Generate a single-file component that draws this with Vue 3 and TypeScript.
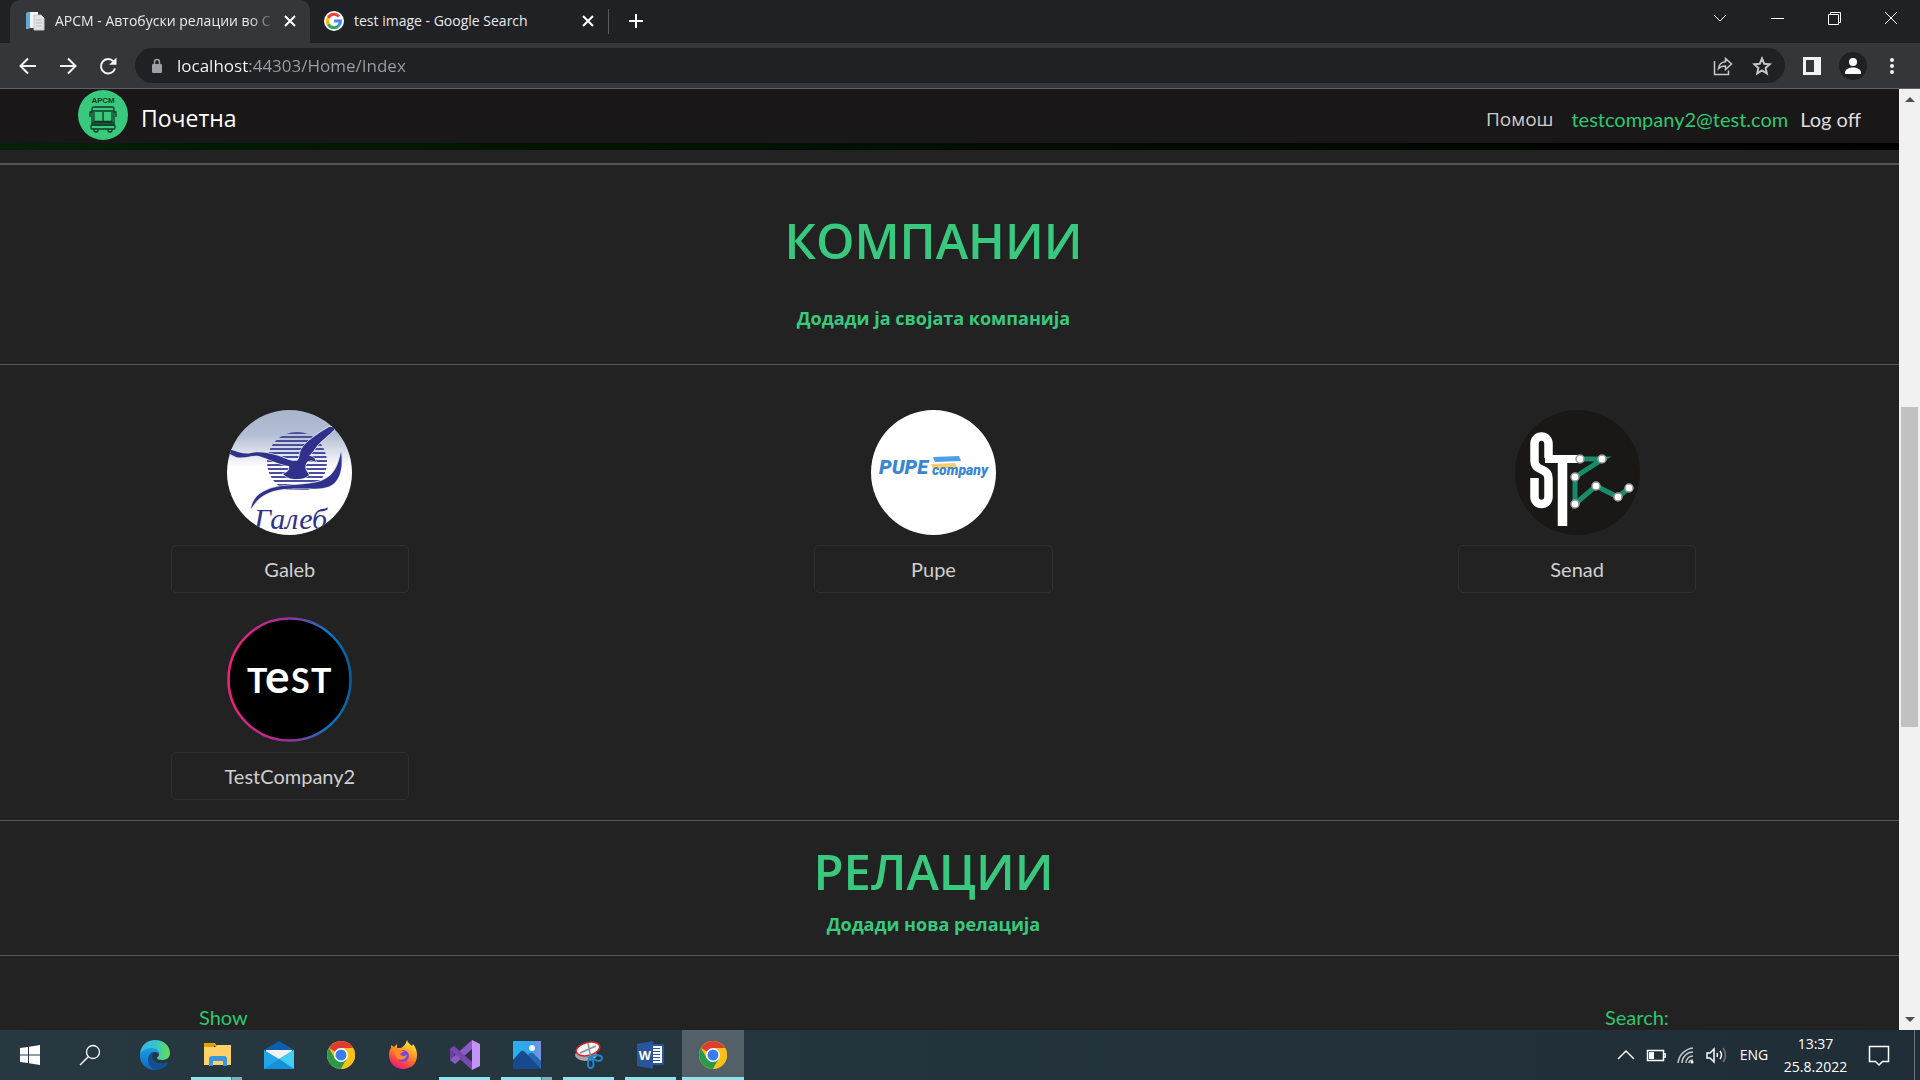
<script setup lang="ts">
interface Company {
  name: string
  logo: 'galeb' | 'pupe' | 'senad' | 'test'
}

interface TaskItem {
  id: string
  label: string
  state: 'idle' | 'open' | 'multi' | 'active'
}

const companies: Company[] = [
  { name: 'Galeb', logo: 'galeb' },
  { name: 'Pupe', logo: 'pupe' },
  { name: 'Senad', logo: 'senad' },
  { name: 'TestCompany2', logo: 'test' },
]

const tasks: TaskItem[] = [
  { id: 'edge', label: 'Edge', state: 'idle' },
  { id: 'explorer', label: 'File Explorer', state: 'multi' },
  { id: 'mail', label: 'Mail', state: 'idle' },
  { id: 'chrome', label: 'Chrome', state: 'idle' },
  { id: 'firefox', label: 'Firefox', state: 'idle' },
  { id: 'vs', label: 'Visual Studio', state: 'open' },
  { id: 'photos', label: 'Photos', state: 'multi' },
  { id: 'snip', label: 'Snipping Tool', state: 'open' },
  { id: 'word', label: 'Word', state: 'open' },
  { id: 'chrome', label: 'Chrome', state: 'active' },
]

// Stripes of the sun behind the gull
const sunStripes: number[] = Array.from({ length: 15 }, (_, i) => 22 + i * 4)
</script>

<template>
  <div class="screen">
    <header class="browser">
      <div class="tabstrip">
        <div class="tab active">
          <svg class="favicon" viewBox="0 0 20 20" aria-hidden="true">
            <path d="M1 2l4-1h8v16H5l-4 1z" fill="#f3f4f5" />
            <path d="M1 2l4-1v16l-4 1z" fill="#5fa8d8" />
            <path d="M9 4h7l3 3v12H9z" fill="#e2e5e8" stroke="#c3c8cd" />
            <path d="M11 9h6M11 12h6M11 15h6" stroke="#b8bec5" />
          </svg>
          <span class="tab-title fade">АРСМ - Автобуски релации во С</span>
          <button class="tab-close" aria-label="Close tab">
            <svg viewBox="0 0 12 12"><path d="M1 1l10 10M11 1L1 11" /></svg>
          </button>
        </div>
        <div class="tab">
          <svg class="favicon" viewBox="0 0 20 20" aria-hidden="true">
            <circle cx="10" cy="10" r="10" fill="#fff" />
            <g fill="none" stroke-width="3">
              <path d="M15 5.4A6.6 6.6 0 0 0 4.2 7" stroke="#ea4335" />
              <path d="M4.2 7a6.6 6.6 0 0 0 0 6.2" stroke="#fbbc05" />
              <path d="M4.2 13.2a6.6 6.6 0 0 0 10.3 1.7" stroke="#34a853" />
              <path d="M14.5 14.900a6.500 6.500 0 0 0 2-4.900H10.200" stroke="#4285f4" />
            </g>
          </svg>
          <span class="tab-title">test image - Google Search</span>
          <button class="tab-close" aria-label="Close tab">
            <svg viewBox="0 0 12 12"><path d="M1 1l10 10M11 1L1 11" /></svg>
          </button>
        </div>
        <span class="tab-sep"></span>
        <button class="new-tab" aria-label="New tab">
          <svg viewBox="0 0 16 16"><path d="M8 1v14M1 8h14" /></svg>
        </button>
        <div class="window-buttons">
          <button aria-label="Search tabs"><svg viewBox="0 0 16 16"><path d="M2 5l6 6 6-6" /></svg></button>
          <button aria-label="Minimize"><svg viewBox="0 0 16 16"><path d="M2 8.5h13" shape-rendering="crispEdges" /></svg></button>
          <button aria-label="Restore"><svg viewBox="0 0 16 16"><path d="M2.5 4.5h10v10h-10zM4.500 4.500v-2h10v10h-2" /></svg></button>
          <button aria-label="Close"><svg viewBox="0 0 16 16"><path d="M2 2l12 12M14 2L2 14" /></svg></button>
        </div>
      </div>
      <div class="toolbar">
        <button class="tool" aria-label="Back">
          <svg viewBox="0 0 20 20"><path d="M18 10H3M10 2.500L2.500 10l7.500 7.500" /></svg>
        </button>
        <button class="tool" aria-label="Forward">
          <svg viewBox="0 0 20 20"><path d="M2 10h15M10 2.500l7.500 7.500-7.500 7.500" /></svg>
        </button>
        <button class="tool" aria-label="Reload">
          <svg viewBox="0 0 20 20">
            <path d="M17 12.500A7.200 7.200 0 1 1 15.500 5.400" />
            <path d="M18.500 1.500v7.300h-7.300z" class="solid" />
          </svg>
        </button>
        <div class="omnibox">
          <svg class="lock" viewBox="0 0 12 16" aria-hidden="true">
            <rect x="1" y="6" width="10" height="9" rx="1" fill="#9aa0a6" />
            <path d="M3.500 6V4a2.500 2.500 0 0 1 5 0v2" fill="none" stroke="#9aa0a6" stroke-width="1.500" />
          </svg>
          <input class="url" type="text" value="localhost:44303/Home/Index" aria-label="Address" />
          <button class="omni-btn" aria-label="Share">
            <svg viewBox="0 0 20 20">
              <path d="M1.500 5v13.500h14v-4" />
              <path d="M5.500 12.500C6 8 8.500 6 12.500 5.700V2.500L18.500 8l-6 5.500V10c-3 0-5.200.6-7 2.500z" />
            </svg>
          </button>
          <button class="omni-btn" aria-label="Bookmark">
            <svg viewBox="0 0 20 20">
              <path class="star" d="M10 2.500l2.200 5.200 5.600.5-4.200 3.700 1.200 5.500L10 14.500l-4.800 2.900 1.200-5.500L2.200 8.200l5.600-.5z" />
            </svg>
          </button>
        </div>
        <button class="side" aria-label="Side panel">
          <svg viewBox="0 0 20 20"><path d="M1 1h18v18H1zM4 4v12h8V4z" fill="#f1f3f4" fill-rule="evenodd" /></svg>
        </button>
        <button class="profile" aria-label="Profile">
          <svg viewBox="0 0 28 28">
            <circle cx="14" cy="14" r="14" fill="#202124" />
            <circle cx="14" cy="10" r="4" fill="#fff" />
            <path d="M6 22v-1.500c0-3 4-5 8-5s8 2 8 5V22z" fill="#fff" />
          </svg>
        </button>
        <button class="menu" aria-label="Menu">
          <svg viewBox="0 0 6 18"><circle cx="3" cy="3" r="2" /><circle cx="3" cy="9" r="2" /><circle cx="3" cy="15" r="2" /></svg>
        </button>
      </div>
    </header>

    <div class="viewport">
      <main class="page">
        <nav class="navbar">
          <a href="#" class="brand">
            <svg class="brand-logo" viewBox="0 0 50 50" aria-hidden="true">
              <circle cx="25" cy="25" r="25" fill="#38c97f" />
              <text x="25" y="13" text-anchor="middle" class="brand-mark">АРСМ</text>
              <g fill="none" stroke="#123824" stroke-width="1.300">
                <path d="M14 35V19q0-2 2-2h18q2 0 2 2v16zM14 21h22M16 22v9.500h18V22M25 22v9.500M14 33h22" />
                <path d="M12 27v-5h2M38 27v-5h-2" />
                <rect x="13" y="35" width="24" height="4" rx="1" />
                <path d="M16 39v2q2 2 4 0v-2M30 39v2q2 2 4 0v-2" />
              </g>
            </svg>
            <span>Почетна</span>
          </a>
          <div class="nav-right">
            <a href="#" class="help">Помош</a>
            <a href="#" class="user">testcompany2@test.com</a>
            <a href="#" class="logoff">Log off</a>
          </div>
        </nav>
        <div class="nav-glow"></div>

        <div class="shifted">
          <section class="intro">
            <h1>КОМПАНИИ</h1>
            <a href="#" class="add-link">Додади ја својата компанија</a>
          </section>

          <section class="companies">
            <article v-for="c in companies" :key="c.name" class="company">
              <svg v-if="c.logo === 'galeb'" class="logo" viewBox="0 0 125 125" aria-hidden="true">
                <defs>
                  <linearGradient id="sky" x1="0" y1="0" x2="0" y2="1">
                    <stop offset="0" stop-color="#a9b4cd" />
                    <stop offset="0.200" stop-color="#b4bed4" />
                    <stop offset="0.460" stop-color="#fff" />
                  </linearGradient>
                  <clipPath id="disc"><circle cx="62.500" cy="62.500" r="62.500" /></clipPath>
                  <clipPath id="sun"><circle cx="70" cy="52" r="30" /></clipPath>
                </defs>
                <g clip-path="url(#disc)">
                  <rect width="125" height="125" fill="url(#sky)" />
                  <g clip-path="url(#sun)">
                    <rect v-for="y in sunStripes" :key="y" x="40" :y="y" width="62" height="2" fill="#4a4c9c" />
                  </g>
                  <g fill="#2f318b" stroke="#dfe3ee" stroke-width="1.500" paint-order="stroke">
                    <path d="M2 39C10 42 16 44 22 43.500 30 41 40 42 52 46c7 3 12 5 17 5 4-1 3-6 5-11C78 33 84 28 102 17l8 0C100 27 93 32 90 36c-3 4-5 7-8 10 4 0 6 2 7 6-4-2-6-2-9 0-2 3-2 6-1 8l3 5c-4 4-9 4-13 4-5 0-9-1-13-5 5-2 7-4 6-8C54 55 44 50 32 46 24 45 17 49 9 47L3 44z" />
                    <path d="M24 99C26 84 40 77 60 75.500c10-1 16-1 22-2 18-2 28-9 32-32 2 14 0 30-12 35-8 3-16 2-24 2-20 0-42-1-54 20.500z" />
                  </g>
                  <text x="27" y="119" class="galeb-mark">Галеб</text>
                </g>
              </svg>

              <svg v-else-if="c.logo === 'pupe'" class="logo" viewBox="0 0 125 125" aria-hidden="true">
                <circle cx="62.500" cy="62.500" r="62.500" fill="#fff" />
                <path d="M62 47l26-1 2 5-26 1z" fill="#4d9fe9" />
                <path d="M60 54l24-1 2 4-24 2z" fill="#f8cf68" />
                <text x="8" y="64" class="pupe-mark">PUPE</text>
                <text x="61" y="65" class="pupe-sub">company</text>
              </svg>

              <svg v-else-if="c.logo === 'senad'" class="logo" viewBox="0 0 125 125" aria-hidden="true">
                <circle cx="62.500" cy="62.500" r="62.500" fill="#191816" />
                <g fill="none" stroke="#fff" stroke-width="8.500">
                  <path d="M33.500 48V33.500a7 7 0 0 0-14 0V51c0 5 3 7 7 8.500s7 4 7 9V87a7 7 0 0 1-14 0V68" />
                  <path d="M30 49h34" stroke-width="8" />
                  <path d="M47.500 49v67" stroke-width="9.500" />
                </g>
                <g fill="none" stroke="#178c68" stroke-width="5">
                  <path d="M65 49h23L60 67v27l21-18 22 11 11-9" />
                </g>
                <g fill="#fff" stroke="#999" stroke-width="1.500">
                  <circle cx="65" cy="49" r="4" />
                  <circle cx="87" cy="49" r="4" />
                  <circle cx="60" cy="67" r="4" />
                  <circle cx="60" cy="94" r="4" />
                  <circle cx="81" cy="76" r="4" />
                  <circle cx="103" cy="87" r="4" />
                  <circle cx="114" cy="78" r="4" />
                </g>
              </svg>

              <svg v-else class="logo" viewBox="0 0 125 125" aria-hidden="true">
                <defs>
                  <linearGradient id="ring">
                    <stop offset="0" stop-color="#f51f7d" />
                    <stop offset="0.500" stop-color="#99309a" />
                    <stop offset="0.820" stop-color="#0b78c4" />
                    <stop offset="1" stop-color="#0a5f9e" />
                  </linearGradient>
                </defs>
                <circle cx="62.500" cy="62.500" r="61" fill="#000" stroke="url(#ring)" stroke-width="2.500" />
                <text y="76" class="test-mark">
                  <tspan x="20">T</tspan><tspan x="38" class="big">e</tspan><tspan x="64">S</tspan><tspan x="84">T</tspan>
                </text>
              </svg>

              <a href="#" class="company-btn">{{ c.name }}</a>
            </article>
          </section>

          <section class="routes">
            <h1>РЕЛАЦИИ</h1>
            <a href="#" class="add-link">Додади нова релација</a>
          </section>

          <form class="filters">
            <label>Show<select></select></label>
            <label>Search:<input type="search" /></label>
          </form>
        </div>
      </main>

      <div class="scrollbar" aria-hidden="true">
        <svg viewBox="0 0 10 6"><path d="M5 0l5 5H0z" /></svg>
        <div class="track"><div class="thumb"></div></div>
        <svg viewBox="0 0 10 6"><path d="M5 6l5-5H0z" /></svg>
      </div>
    </div>

    <footer class="taskbar">
      <button class="sys" aria-label="Start">
        <svg class="start" viewBox="0 0 20 20">
          <path d="M0 3l8-1v7.500H0zM9 1.800L20 0v9.500H9zM0 10.500h8V18l-8-1zM9 10.500h11V20L9 18.200z" fill="#fff" />
        </svg>
      </button>
      <button class="sys" aria-label="Search">
        <svg viewBox="0 0 22 22"><circle cx="14" cy="8" r="6.500" fill="none" stroke="#fff" stroke-width="1.300" /><path d="M9.500 12.500L1 21" stroke="#fff" stroke-width="1.500" /></svg>
      </button>

      <button v-for="(t, i) in tasks" :key="i" class="task" :class="t.state" :aria-label="t.label">
        <svg v-if="t.id === 'edge'" viewBox="0 0 30 30">
          <defs>
            <linearGradient id="edgeTop"><stop offset="0" stop-color="#35b6e8" /><stop offset="0.550" stop-color="#38c5c8" /><stop offset="1" stop-color="#6be04c" /></linearGradient>
            <linearGradient id="edgeLow" x1="0" y1="0" x2="0" y2="1"><stop offset="0" stop-color="#1b9de2" /><stop offset="1" stop-color="#0c68c0" /></linearGradient>
          </defs>
          <path d="M0 14C1 5 7 0 15 0c9 0 15 6 15 13 0 5-4 7-8 7-3 0-5-1-5-2 0-1 2-1 2-4 0-3-3-5-7-5-6 0-10 3-12 5z" fill="url(#edgeTop)" />
          <path d="M0 14c2-3 6-6 11-6 4 0 8 2 8 6-1-1-2-2-4-2-3 0-6 3-6 7 0 5 3 9 9 11C7 31-1 24 0 14z" fill="url(#edgeLow)" />
          <path d="M13 12c-3 1-5 4-5 8 0 6 5 10 10 10 4-1 8-3 10-7 0-1 0-1-1-1-6 3-15 1-15-6 0-2 1-3 1-4z" fill="#134f93" />
        </svg>

        <svg v-else-if="t.id === 'explorer'" viewBox="0 0 30 30">
          <path d="M2 3h11l2 3h-3v4H2z" fill="#e0a100" />
          <path d="M2 7h11l2-2h14v20H2z" fill="#fed268" />
          <path d="M7 26v-7q0-3 3-3h12q3 0 3 3v7h-4v-5H11v5z" fill="#3a97dd" />
        </svg>

        <svg v-else-if="t.id === 'mail'" viewBox="0 0 30 30">
          <path d="M0 10L15 1l15 9v5H0z" fill="#0c5fae" />
          <path d="M2 10h26v9H2z" fill="#f2f2f2" />
          <path d="M0 10l15 9 15-9v19H0z" fill="#20a7e8" />
          <path d="M15 19l15-9v19z" fill="#43cff5" />
          <path d="M0 29L15 19l15 10z" fill="#188fd9" />
        </svg>

        <svg v-else-if="t.id === 'chrome'" viewBox="0 0 30 30">
          <circle cx="15" cy="15" r="14" fill="#fbc116" />
          <path d="M15 15L2.900 8A14 14 0 0 1 27.100 8z" fill="#df3b2f" />
          <path d="M8.900 18.500L2.900 8A14 14 0 0 0 15 29l6-10.500z" fill="#2a9a4a" />
          <path d="M15 8h12.100a14 14 0 0 1-12.100 21l6-10.500z" fill="#fbc116" />
          <circle cx="15" cy="15" r="7" fill="#fff" />
          <circle cx="15" cy="15" r="5.500" fill="#3c7ded" />
        </svg>

        <svg v-else-if="t.id === 'firefox'" viewBox="0 0 30 30">
          <defs>
            <linearGradient id="fox" x1="0.800" y1="0" x2="0.300" y2="1"><stop offset="0" stop-color="#fff04a" /><stop offset="0.450" stop-color="#ff9320" /><stop offset="0.800" stop-color="#ff3b47" /><stop offset="1" stop-color="#e5178f" /></linearGradient>
          </defs>
          <path d="M19 0c1 3 3 4 5 6l1-2c3 4 4 7 4 11 0 9-6 14-14 14S1 23 1 15c0-4 1-6 2-7l0-3c1 1 2 1 3 2l3-3v4h4c3-2 5-4 6-8z" fill="url(#fox)" />
          <circle cx="15" cy="16" r="6" fill="#7d45dd" />
          <path d="M5 9c4-1 6 1 11 2-1 2-4 2-4 3 2 3 4 2 7 1-2 6-9 6-11 2-1-3 0-4-3-8z" fill="#ff8b23" />
        </svg>

        <svg v-else-if="t.id === 'vs'" viewBox="0 0 30 30">
          <path d="M0 9l4-3 18 18v6L4 14l0 8L0 20z" fill="#6a3fa0" />
          <path d="M0 20L22 0v9L5 24z" fill="#8b5bc8" />
          <path d="M4 6l18 16v8L0 9z" fill="#7649ae" />
          <path d="M22 0l8 4v22l-8 4z" fill="#c493f7" />
        </svg>

        <svg v-else-if="t.id === 'photos'" viewBox="0 0 30 30">
          <defs><linearGradient id="photoSky"><stop offset="0" stop-color="#27b0ec" /><stop offset="0.600" stop-color="#35a3ea" /><stop offset="1" stop-color="#7b93dd" /></linearGradient></defs>
          <path d="M1 1h28v28H1z" fill="url(#photoSky)" />
          <path d="M14 17l4-4q2-1 4 1l7 7v8h-6z" fill="#2665b1" />
          <path d="M1 20l8-9q2-1 4 1l16 17H1z" fill="#164a8c" />
          <circle cx="20" cy="8" r="3" fill="#f0f4f8" />
        </svg>

        <svg v-else-if="t.id === 'snip'" viewBox="0 0 30 30">
          <ellipse cx="12" cy="15" rx="11" ry="6" fill="#a4a7aa" />
          <ellipse cx="14" cy="9" rx="12" ry="6.500" fill="#f5f5f5" stroke="#d4272c" stroke-width="1.500" transform="rotate(-14 14 9)" />
          <path d="M14 3l3 16M6 13L22 6" stroke="#8c9299" stroke-width="1.500" />
          <path d="M16 17c3-2 12-3 12 1s-6 4-11-1zM16 17c-3 4-3 12 1 11s3-7-1-11z" fill="none" stroke="#1c87cf" stroke-width="2" />
        </svg>

        <svg v-else viewBox="0 0 30 30">
          <path d="M15 4h12q1 0 1 1v19q0 1-1 1H15z" fill="#2a549c" />
          <path d="M16 6h10v17H16z" fill="#fff" />
          <path d="M16 8.500h8M16 11.500h8M16 14.500h8M16 17.500h8M16 20.500h8" stroke="#2a549c" />
          <path d="M1 4l16-3v28L1 26z" fill="#2a549c" />
          <text x="9" y="20" text-anchor="middle" class="word-mark">W</text>
        </svg>
      </button>

      <div class="tray">
        <button class="tray-btn" aria-label="Show hidden icons">
          <svg viewBox="0 0 20 20"><path d="M2 14l8-8 8 8" /></svg>
        </button>
        <button class="tray-btn" aria-label="Battery">
          <svg viewBox="0 0 20 20"><path d="M1.500 5.500h16v10h-16zM18 9h1.500v3H18" /><path d="M3 7h5v7H3z" class="fill" /></svg>
        </button>
        <button class="tray-btn" aria-label="Network">
          <svg viewBox="0 0 20 20"><path d="M2 18C3 10 9 4 17 3M6 18c0-6 5-11 11-11M10 18c0-4 3-7 7-7" class="dim" /><path d="M13 18c0-2 2-3 4-3" class="dim" /><circle cx="16" cy="17" r="1.500" class="fill" /></svg>
        </button>
        <button class="tray-btn" aria-label="Volume">
          <svg viewBox="0 0 20 20"><path d="M1 8h3l4-4v13l-4-4H1zM11 8q1 2 0 4M14 6q3 4 0 8" /><path d="M17 3q5 7 0 14" class="faint" /></svg>
        </button>
        <button class="lang">ENG</button>
        <button class="clock"><span>13:37</span><span>25.8.2022</span></button>
        <button class="notes" aria-label="Notifications">
          <svg viewBox="0 0 22 22"><path d="M1.500 2.500h19v15h-6L11 21l-3.500-3.500h-6z" /></svg>
        </button>
        <span class="peek"></span>
      </div>
    </footer>
  </div>
</template>

<style>
body {
  margin: 0;
  background: #222;
}
</style>

<style scoped>
* {
  box-sizing: border-box;
}

.screen {
  display: flex;
  flex-direction: column;
  height: 100vh;
  overflow: hidden;
  background: #222;
  font-family: "Open Sans", "Noto Sans", sans-serif;
}

svg {
  display: block;
  flex: none;
}

button {
  display: flex;
  align-items: center;
  justify-content: center;
  flex: none;
  margin: 0;
  padding: 0;
  border: 0;
  background: none;
  color: inherit;
  font: inherit;
}

a {
  text-decoration: none;
}

/* Browser frame */
.browser {
  flex: none;
  background: #35363a;
  border-bottom: 1px solid #5f6063;
}

.tabstrip {
  display: flex;
  height: 43px;
  padding-left: 10px;
  background: #202124;
  color: #e8eaed;
}

.tab {
  display: flex;
  align-items: center;
  width: 298px;
  padding: 0 12px 2px 14px;
}

.tab.active {
  width: 300px;
  padding-left: 15px;
  border-radius: 10px 10px 0 0;
  background: #35363a;
}

.favicon {
  width: 20px;
  height: 20px;
}

.tab-title {
  flex: 1;
  margin: 0 6px 0 10px;
  white-space: nowrap;
  font-size: 14px;
  line-height: 20px;
}

.fade {
  mask-image: linear-gradient(to right, #000 88%, transparent);
}

.tab-close {
  width: 16px;
  height: 16px;
}

.tab-close svg {
  width: 12px;
  height: 12px;
}

.tab-close path,
.new-tab path {
  fill: none;
  stroke: #fff;
  stroke-width: 2;
}

.tab-sep {
  width: 1px;
  height: 25px;
  margin-top: 9px;
  background: #5b5c60;
}

.new-tab {
  width: 54px;
  height: 42px;
}

.new-tab svg {
  width: 16px;
  height: 16px;
}

.window-buttons {
  display: flex;
  margin: 0 1px 0 auto;
}

.window-buttons button {
  width: 57px;
  height: 36px;
}

.window-buttons svg {
  width: 16px;
  height: 16px;
}

.window-buttons path {
  fill: none;
  stroke: #fff;
}

.toolbar {
  display: flex;
  align-items: center;
  height: 45px;
  padding: 0 14px 0 8px;
}

.tool {
  width: 40px;
  height: 40px;
}

.tool svg {
  width: 20px;
  height: 20px;
}

.tool path {
  fill: none;
  stroke: #f1f3f4;
  stroke-width: 2;
}

.tool .solid {
  fill: #f1f3f4;
  stroke: none;
}

.omnibox {
  display: flex;
  align-items: center;
  flex: 1;
  height: 35px;
  margin-left: 7px;
  padding: 0 4px 0 16px;
  border-radius: 18px;
  background: #202124;
}

.lock {
  width: 12px;
  height: 16px;
}

.url {
  flex: 1;
  min-width: 0;
  margin: 0 0 0 14px;
  padding: 0;
  border: 0;
  outline: 0;
  background: linear-gradient(to right, #fff 73px, #9aa0a6 73px);
  background-clip: text;
  -webkit-text-fill-color: transparent;
  font: 17px/24px "Open Sans", "Noto Sans", sans-serif;
}

.omni-btn {
  width: 39px;
  height: 35px;
}

.omni-btn svg {
  width: 20px;
  height: 20px;
}

.omni-btn path {
  fill: none;
  stroke: #c4c7c9;
  stroke-width: 1.500;
}

.omni-btn .star {
  stroke-width: 2;
}

.side {
  width: 54px;
}

.side svg {
  width: 20px;
  height: 20px;
}

.profile svg {
  width: 28px;
  height: 28px;
}

.menu {
  width: 50px;
  margin-right: -11px;
}

.menu svg {
  width: 6px;
  height: 18px;
}

.menu circle {
  fill: #f1f3f4;
}

/* Page */
.viewport {
  display: flex;
  flex: 1;
  min-height: 0;
}

.page {
  flex: 1;
  min-width: 0;
  overflow: hidden;
}

.navbar {
  display: flex;
  justify-content: space-between;
  height: 54px;
  padding: 0 38px 0 78px;
  background: #1a1718;
}

.brand {
  display: flex;
  align-items: center;
  gap: 13px;
  padding-bottom: 3px;
  color: #fff;
  font-size: 23px;
  line-height: 32px;
}

.brand span {
  margin-top: 7px;
}

.brand-logo {
  width: 50px;
  height: 50px;
}

.brand-mark {
  fill: #123824;
  font: 700 8px "Liberation Sans", sans-serif;
}

.nav-right {
  display: flex;
  align-items: center;
  padding-top: 6px;
  font: 20px/24px Lato, sans-serif;
}

.help {
  margin-right: 18px;
  color: #ccc;
  font-family: "Open Sans", "Noto Sans", sans-serif;
  font-size: 19px;
}

.user {
  margin-right: 12px;
  color: #2dc76f;
}

.logoff {
  color: #ddd;
}

.nav-glow {
  height: 7px;
  background: linear-gradient(to right, #06230a, #001a00 12%, #000);
}

.shifted {
  margin: 13px 0 0 -32px;
  border-top: 2px solid #555;
}

.intro,
.routes {
  display: flex;
  flex-direction: column;
  align-items: center;
  border-bottom: 1px solid #555;
}

.intro {
  padding: 45px 0 34px;
}

.routes {
  padding: 20px 0 19px;
}

h1 {
  margin: 0;
  color: #38c97f;
  font-size: 49px;
  font-weight: 600;
  line-height: 60px;
}

.add-link {
  color: #38c97f;
  font-size: 18px;
  font-weight: 700;
  line-height: 24px;
}

.intro .add-link {
  margin-top: 36px;
}

.routes .add-link {
  margin-top: 11px;
}

.companies {
  display: grid;
  grid-template-columns: repeat(3, 1fr);
  row-gap: 24px;
  padding: 45px 0 20px;
  border-bottom: 1px solid #555;
}

.company {
  display: flex;
  flex-direction: column;
  align-items: center;
  gap: 10px;
}

.logo {
  width: 125px;
  height: 125px;
}

.company-btn {
  width: 37%;
  border: 1px solid #2f2f2f;
  border-radius: 5px;
  color: #d0d0d0;
  font: 20px/46px Lato, sans-serif;
  text-align: center;
}

.galeb-mark {
  fill: #2f318b;
  font: italic 30px "Liberation Serif", serif;
}

.pupe-mark {
  fill: #3a86d3;
  font: italic 900 20px Roboto, sans-serif;
}

.pupe-sub {
  fill: #3a86d3;
  font: italic 900 14px Roboto, sans-serif;
}

.test-mark {
  fill: #fff;
  font: 700 34px Lato, sans-serif;
}

.test-mark .big {
  font-size: 46px;
}

.filters {
  display: flex;
  justify-content: space-between;
  height: 80px;
  padding: 49px 229px 0 231px;
}

.filters label {
  display: flex;
  flex-direction: column;
  width: 65px;
  gap: 12px;
  color: #2dc76f;
  font: 20px/24px Lato, sans-serif;
}

/* Scrollbar */
.scrollbar {
  display: flex;
  flex-direction: column;
  align-items: center;
  width: 21px;
  padding: 8px 0;
  background: #f1f1f1;
}

.scrollbar svg {
  width: 10px;
  height: 6px;
}

.scrollbar path {
  fill: #505050;
}

.track {
  display: flex;
  flex: 1;
  flex-direction: column;
}

.track::before,
.track::after {
  flex: 304 0 0;
  content: "";
}

.track::after {
  flex-grow: 289;
}

.thumb {
  flex: 320 0 0;
  width: 17px;
  background: #c1c1c1;
}

/* Taskbar */
.taskbar {
  display: flex;
  flex: none;
  height: 50px;
  background: linear-gradient(to right, #273840, #24343d 45%, #1f2d36);
  color: #fff;
}

.sys {
  width: 60px;
}

.sys svg {
  width: 22px;
  height: 22px;
}

.sys .start {
  width: 20px;
  height: 20px;
}

.sys + .task {
  margin-left: 4px;
}

.task {
  width: 62px;
  background-repeat: no-repeat;
  background-position: left bottom;
  background-size: 100% 3px;
}

.task svg {
  width: 30px;
  height: 30px;
}

.task.open {
  background-image: linear-gradient(to right, transparent 5px, #8fe3ee 5px, #8fe3ee 56px, transparent 56px);
}

.task.multi {
  background-image: linear-gradient(to right, transparent 5px, #8fe3ee 5px, #8fe3ee 45px, #50777f 45px, #50777f 46px, #77b3bb 46px, #77b3bb 56px, transparent 56px);
}

.task.active {
  background-color: #536067;
  background-image: linear-gradient(#8fe3ee, #8fe3ee);
}

.word-mark {
  fill: #fff;
  font: 700 13px "Liberation Sans", sans-serif;
}

.tray {
  display: flex;
  align-items: center;
  margin-left: auto;
}

.tray-btn {
  width: 30px;
  height: 50px;
}

.tray-btn svg {
  width: 20px;
  height: 20px;
}

.tray path {
  fill: none;
  stroke: #fff;
  stroke-width: 1.500;
}

.tray .fill {
  fill: #fff;
  stroke: none;
}

.tray .dim {
  stroke: #c0c6ca;
}

.tray .faint {
  stroke: #6d7a82;
}

.lang {
  width: 46px;
  font-size: 14px;
  line-height: 20px;
}

.clock {
  flex-direction: column;
  width: 77px;
  font-size: 14px;
  line-height: 23px;
}

.notes {
  width: 50px;
}

.notes svg {
  width: 22px;
  height: 22px;
}

.peek {
  width: 6px;
  height: 50px;
  margin-left: 10px;
  border-left: 1px solid #69747b;
}
</style>
